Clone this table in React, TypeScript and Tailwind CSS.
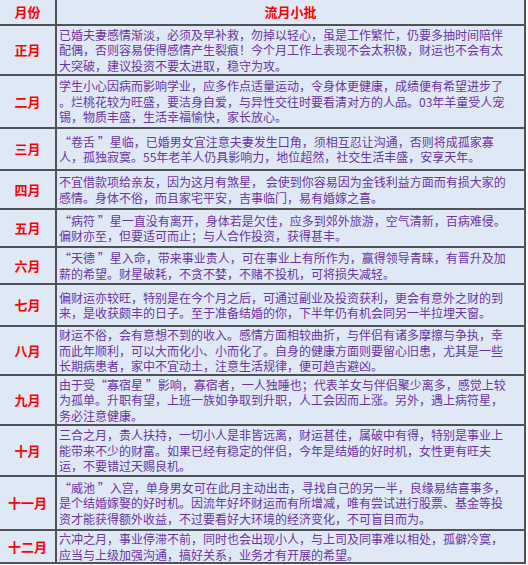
import React from "react";

type Row = { m: string; h: string; lines: string[] };

const rows: Row[] = [
  {
    m: "正月",
    h: "h-[50px]",
    lines: [
      "已婚夫妻感情渐淡，必须及早补救，勿掉以轻心，虽是工作繁忙，仍要多抽时间陪伴",
      "配偶，否则容易使得感情产生裂痕！今个月工作上表现不会太积极，财运也不会有太",
      "大突破，建议投资不要太进取，稳守为攻。",
    ],
  },
  {
    m: "二月",
    h: "h-[53px]",
    lines: [
      "学生小心因病而影响学业，应多作点适量运动，令身体更健康，成绩便有希望进步了",
      "。烂桃花较为旺盛，要洁身自爱，与异性交往时要看清对方的人品。03年羊童受人宠",
      "锡，物质丰盛，生活幸福愉快，家长放心。",
    ],
  },
  {
    m: "三月",
    h: "h-[42px]",
    lines: [
      "“卷舌 ”星临，已婚男女宜注意夫妻发生口角，须相互忍让沟通，否则将成孤家寡",
      "人，孤独寂寞。55年老羊人仍具影响力，地位超然，社交生活丰盛，安享天年。",
    ],
  },
  {
    m: "四月",
    h: "h-[39px]",
    lines: [
      "不宜借款项给亲友，因为这月有煞星， 会使到你容易因为金钱利益方面而有损大家的",
      "感情。身体不俗，而且家宅平安，吉事临门，易有婚嫁之喜。",
    ],
  },
  {
    m: "五月",
    h: "h-[38px]",
    lines: [
      "“病符 ”星一直没有离开，身体若是欠佳，应多到郊外旅游，空气清新，百病难侵。",
      "偏财亦至，但要适可而止；与人合作投资，获得甚丰。",
    ],
  },
  {
    m: "六月",
    h: "h-[37px]",
    lines: [
      "“天德 ”星入命，带来事业贵人，可在事业上有所作为，赢得领导青睐，有晋升及加",
      "薪的希望。财星破耗，不贪不婪，不赌不投机，可将损失减轻。",
    ],
  },
  {
    m: "七月",
    h: "h-[42px]",
    lines: [
      "偏财运亦较旺，特别是在今个月之后，可通过副业及投资获利，更会有意外之财的到",
      "来，是收获颇丰的日子。至于准备结婚的你，下半年仍有机会同另一半拉埋天窗。",
    ],
  },
  {
    m: "八月",
    h: "h-[49px]",
    lines: [
      "财运不俗，会有意想不到的收入。感情方面相较曲折，与伴侣有诸多摩擦与争执，幸",
      "而此年顺利，可以大而化小、小而化了。自身的健康方面则要留心旧患，尤其是一些",
      "长期病患者，家中不宜动土，注意生活规律，便可趋吉避凶。",
    ],
  },
  {
    m: "九月",
    h: "h-[50px]",
    lines: [
      "由于受“寡宿星 ”影响，寡宿者，一人独睡也；代表羊女与伴侣聚少离多，感觉上较",
      "为孤单。升职有望，上班一族如争取到升职，人工会因而上涨。另外，遇上病符星，",
      "务必注意健康。",
    ],
  },
  {
    m: "十月",
    h: "h-[51px]",
    lines: [
      "三合之月，贵人扶持，一切小人是非皆远离，财运甚佳，属破中有得，特别是事业上",
      "能带来不少的财富。如果已经有稳定的伴侣，今年是结婚的好时机，女性更有旺夫",
      "运，不要错过天赐良机。",
    ],
  },
  {
    m: "十一月",
    h: "h-[54px]",
    lines: [
      "“威池 ”入宫，单身男女可在此月主动出击，寻找自己的另一半，良缘易结喜事多，",
      "是个结婚嫁娶的好时机。因流年好坏财运而有所增减，唯有尝试进行股票、基金等投",
      "资才能获得额外收益，不过要看好大环境的经济变化，不可盲目而为。",
    ],
  },
  {
    m: "十二月",
    h: "h-[33px]",
    lines: [
      "六冲之月，事业停滞不前，同时也会出现小人，与上司及同事难以相处，孤僻冷寞，",
      "应当与上级加强沟通，搞好关系，业务才有开展的希望。",
    ],
  },
];

export default function App() {
  return (
    <div
      className="w-[528px] h-[565px] bg-white overflow-hidden"
      style={{ fontFamily: '"Noto Sans CJK SC", "Noto Sans", sans-serif' }}
    >
      <div className="w-[526px] bg-[#dfe9f5] border-r-2 border-b-2 border-[#4f5258]">
        <div className="flex h-[24px]">
          <div className="w-[57px] shrink-0 border-r-2 border-[#4f5258] flex items-center justify-center text-[13px] font-bold text-[#ff0000]">
            月份
          </div>
          <div className="flex-1 flex items-center justify-center text-[13px] font-bold text-[#ff0000]">
            流月小批
          </div>
        </div>
        {rows.map((r) => (
          <div key={r.m} className={`flex border-t-2 border-[#4f5258] ${r.h}`}>
            <div className="w-[57px] shrink-0 border-r-2 border-[#4f5258] flex items-center justify-center text-[13px] font-bold text-[#ff0000]">
              {r.m}
            </div>
            <div className="flex-1 min-w-0 flex flex-col justify-center pl-[2px] text-[12px] leading-[15.5px] text-[#6b34a8]">
              {r.lines.map((l, i) => (
                <div key={i} className="whitespace-nowrap">
                  {l}
                </div>
              ))}
            </div>
          </div>
        ))}
      </div>
    </div>
  );
}
